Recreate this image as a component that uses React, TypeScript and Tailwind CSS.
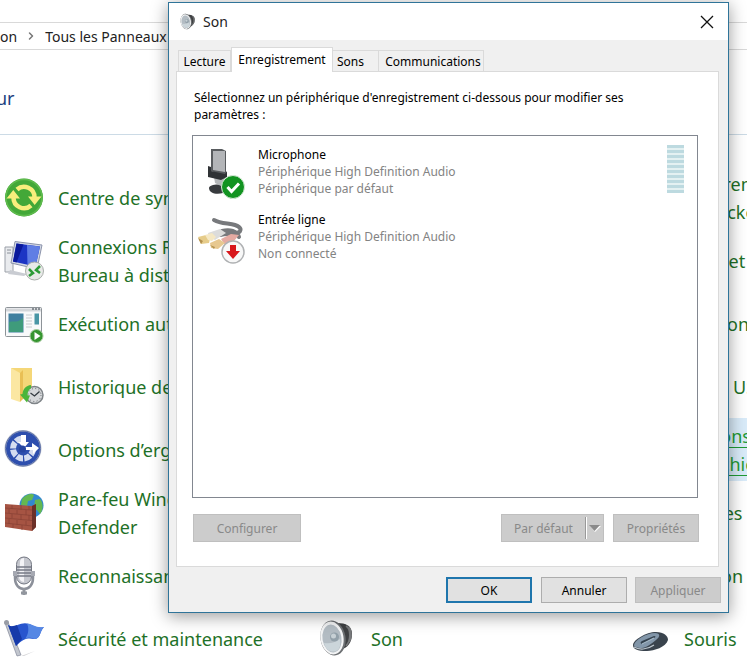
import { ChevronRight } from 'lucide-react';
import type { ReactNode } from 'react';

const Svg = (props: { size?: number; children: ReactNode }) => (
  <svg width={props.size ?? 40} height={props.size ?? 40} viewBox="0 0 40 40" aria-hidden="true">
    {props.children}
  </svg>
);

const SyncIcon = () => (
  <Svg>
    <circle cx="20" cy="19.500" r="19" fill="#43a838" />
    <circle cx="20" cy="19.500" r="18" fill="none" stroke="#5fbb4d" strokeWidth="1.500" />
    <path d="M13 11.500a10.500 10.500 0 0 1 17.500 8" fill="none" stroke="#f8ee7c" strokeWidth="4.500" />
    <path d="M27 27.500a10.500 10.500 0 0 1-17.500-8" fill="none" stroke="#f8ee7c" strokeWidth="4.500" />
    <path d="M24 18.500h13.500L30.700 27zM16 20.500H2.500L9.300 12z" fill="#f8ee7c" />
  </Svg>
);

const RemoteIcon = () => (
  <Svg>
    <path d="M1 6h8v25H1z" fill="#e9ebee" stroke="#9ba0a8" />
    <path d="M3 9h4M3 12h4" stroke="#8a9098" />
    <path d="m6 29 17 4-3 2-16-2z" fill="#c9ccd2" />
    <path d="m11 .5 27 3.500-5 24L7 22z" fill="#d3d8e4" stroke="#8c94ab" />
    <path d="m12.500 2.500 23.500 3-4.500 20L9 20.500z" fill="#1c35c4" />
    <path d="m23 4 13 1.500-4.500 20-8-1.800z" fill="#607ee4" />
    <path d="m12.500 2.500 7 1-7 18-3.500-1z" fill="#0a199b" />
    <circle cx="30.500" cy="30" r="9" fill="#e8eae8" stroke="#a9adaa" />
    <path d="m25 28 4 4-4 3M36 25l-4 4 4 3" fill="none" stroke="#2c9b37" strokeWidth="2.500" />
  </Svg>
);

const AutoplayIcon = () => (
  <Svg>
    <rect x="1.500" y="3.500" width="36" height="29" rx="1" fill="#f8f9fa" stroke="#8d9398" />
    <path d="M2 6h35" stroke="#d3d6d9" strokeWidth="3" />
    <path d="M28 5h8" stroke="#6d747b" strokeWidth="1.500" strokeDasharray="2 1" />
    <rect x="4.500" y="9.500" width="15" height="19" fill="#3f7f9f" />
    <path d="M5 28V18c4-2 7 2 14-4v14z" fill="#3f9b7b" />
    <path d="M22 11h6M22 14h6M22 17h6M22 20h6M22 23h6" stroke="#c6cacd" />
    <rect x="30.500" y="9.500" width="4.500" height="11" fill="#4996a5" />
    <circle cx="32.500" cy="32" r="6.500" fill="#35952f" stroke="#a5ca9e" />
    <path d="M30.500 28v8l6-4z" fill="#fff" />
  </Svg>
);

const HistoryIcon = () => (
  <Svg>
    <path d="M7 1h21v31H15z" fill="#f5d778" />
    <path d="m7 1 9 5v29L7 32z" fill="#fbe7a2" />
    <path d="m16 6 3-3v29l-3 3z" fill="#e9bf55" />
    <circle cx="30.500" cy="28" r="8.500" fill="#d6d8da" stroke="#7e8387" strokeWidth="1.500" />
    <circle cx="30.500" cy="28" r="6.500" fill="none" stroke="#64696e" strokeDasharray="1 2.400" />
    <path d="m26.500 26 4 3 5-4.500" fill="none" stroke="#333a40" strokeWidth="1.300" />
    <path d="M27 18c-5 .5-8 4-8.500 9l-2.500.5 7 8 3-7-2.500-.2c0-3 1-5.500 3.500-7z" fill="#4bb53b" />
  </Svg>
);

const EaseIcon = () => (
  <Svg>
    <circle cx="19" cy="18.500" r="18.500" fill="#b9c0cf" />
    <circle cx="19" cy="18.500" r="17" fill="#2e4fae" />
    <circle
      cx="19"
      cy="18.500"
      r="10"
      fill="none"
      stroke="#d5ddf0"
      strokeWidth="6"
      strokeDasharray="6.550 1.300"
      pathLength="62.800"
    />
    <path d="M20 5h8l5 5 1 9H20z" fill="#2e4fae" />
    <path d="M17 5h5v7h3l-5 6-6-6h3z" fill="#fff" />
    <path d="M20 17h8v-4l7 5-6 6v-4h-9z" fill="#fff" />
    <circle cx="18.500" cy="19" r="3.500" fill="#2745a0" />
    <circle cx="19" cy="18.500" r="17.500" fill="none" stroke="#5d70a8" />
  </Svg>
);

const FirewallIcon = () => (
  <Svg>
    <circle cx="27.500" cy="12.500" r="12" fill="#3389cf" />
    <path d="M18 6c4-5 10-6 12-4l-2 5-4 1-1 5-6-1zM31 7l5-1c4 5 3 11 0 15l-3-4-3-1z" fill="#64b851" />
    <path d="m1 11 27 2 4-2v23l-4 4-27-4z" fill="#a65443" />
    <path d="m28 13 4-2v23l-4 4z" fill="#6c3028" />
    <path
      d="m1 15 27 2M1 20l27 2.500M1 25l27 2.500M1 30l27 3M8 12v4M17 12v5M25 13v4M5 16v4M13 17v4M22 17v5M8 21v4M17 22v5M25 22v5M5 26v5M13 27v5M22 28v4M9 31v4M18 32v5"
      stroke="#8a4336"
      strokeWidth="0.800"
    />
  </Svg>
);

const SpeechIcon = () => (
  <Svg>
    <path d="M11 16v6c0 7 4 11 9 11s9-4 9-11v-6" fill="none" stroke="#8c909a" strokeWidth="2.500" />
    <path d="M20 32v7M17 37h6" stroke="#92969e" strokeWidth="3" />
    <rect x="12.500" y="1" width="15" height="27" rx="7.500" fill="#c5c7ce" stroke="#737782" />
    <path d="M16 6c0-3 2-4 4-4v24c-3 0-5-3-5-5z" fill="#f3f3f6" />
    <path d="M13 11h14M13 14h14M13 17h14M13 20h14" stroke="#777b87" strokeWidth="1.300" />
    <path d="M9 15h4v5H9zM27 15h4v5h-4z" fill="#a6a9b2" />
  </Svg>
);

const FlagIcon = () => (
  <Svg>
    <path d="m17 37 14-5-11 5z" fill="#d5d5d8" />
    <path d="m1 4 12 33 4-1L4 3z" fill="#c2c6ce" stroke="#83889a" strokeWidth="0.700" />
    <circle cx="2.500" cy="3.500" r="2.500" fill="#999da6" />
    <path d="M4 6c7 5 11-4 21-1 4 1 8 5 15 3-5 5-3 12-10 12-6-1-10-1-18 7z" fill="#2855ce" />
    <path d="M23 4.500c5 0 9 5 17 3.500-5 5-3 12-10 12-4-2-7-1-9 0 4-5 4-11 2-15.500z" fill="#5587e4" />
    <path d="M4 6c3 2 6 1 9 0l5 14-6 7z" fill="#163aa9" />
  </Svg>
);

const SpeakerIcon = (props: { size?: number }) => (
  <Svg size={props.size}>
    <path d="M20 4c9 0 15 3 15 11s-4 14-12 16z" fill="#3e4042" />
    <path d="M29 7c5 3 5 14 0 20M32 8c3 4 3 12-1 16" fill="none" stroke="#77797b" strokeWidth="1.500" />
    <ellipse cx="16" cy="19" rx="12.500" ry="17.500" fill="#6d7073" transform="rotate(-10 16 19)" />
    <ellipse cx="15" cy="19" rx="11.500" ry="16.500" fill="#f3f4f5" transform="rotate(-10 15 19)" />
    <ellipse cx="15" cy="19.500" rx="9.500" ry="14" fill="#b3bcc3" transform="rotate(-10 15 19.500)" />
    <path d="M7 24c2 7 7 10 12 8 4-2 5-6 4-12-6 4-10 5-16 4z" fill="#cbd5da" />
    <circle cx="17.500" cy="18" r="4.500" fill="#92a0a9" />
    <circle cx="16.500" cy="17" r="2.500" fill="#c7d0d5" />
  </Svg>
);

const MouseIcon = () => (
  <Svg>
    <path d="M3 26c0-5 13-13 23-13 8 0 12 4 12 8-2 7-14 11-21 11C7 32 3 30 3 26z" fill="#39434d" />
    <path d="M4 26c1-5 12-12 21-12 6 0 5 4 1 7-5 4-10 8-14 8-5 0-8-1-8-3z" fill="#8296a9" />
    <path d="m12 22 12-5c2 0 2 1 0 2l-11 6c-3 0-3-2-1-3z" fill="#33414d" />
    <path d="m12 25 12-6" stroke="#a9bccb" strokeWidth="1.200" />
    <path d="M4 28c5 3 13 3 20-2" fill="none" stroke="#bcc6ce" strokeWidth="1.200" />
  </Svg>
);

const MicrophoneDevice = () => (
  <svg width="48" height="56" viewBox="0 0 48 56" aria-hidden="true">
    <path d="M12 44c0-3 10-5 16-2l-2 7c-7 2-14 0-14-5z" fill="#383b3e" />
    <path d="m17 33 8-2 6 6-5 6-8-4z" fill="#b5b8ba" />
    <path d="M14 5h11l4 2v23l-4 1-11-4z" fill="#595c5f" />
    <path d="M16 7h12v21l-12-2z" fill="#b3b5b8" />
    <path d="m11 22 3 1v4l14 3 2-3v6l-6 3-13-3z" fill="#303336" />
    <circle cx="36" cy="43" r="11.500" fill="#129321" stroke="#d9ead9" />
    <path d="m30.500 43 4 4.500 7.500-8" fill="none" stroke="#fff" strokeWidth="3" />
  </svg>
);

const LineInDevice = () => (
  <svg width="48" height="56" viewBox="0 0 48 56" aria-hidden="true">
    <path
      d="M17 11c7 4 15 3 21 5 6 2 8 6 2 8-5 2-11 0-17 2M25 22c8-2 15 0 17 6"
      fill="none"
      stroke="#77797c"
      strokeWidth="4"
      strokeLinecap="round"
    />
    <path d="m11 24 12-4 6 4-11 7-6-3z" fill="#dcdcdb" />
    <path d="m24 30 10-5 8 1-5 6-9 4z" fill="#e4aaa2" />
    <path d="m1 28 8-2 4 4-1 4-8 1z" fill="#e6cc8a" />
    <path d="m8 26 7-2 4 4-4 4-4-1z" fill="#f5e8c4" />
    <path d="m13 34 9-4 6 4-7 6-7-1z" fill="#e7c890" />
    <path d="m1 29 5 3-2 3zM13 36l5 2-1 2z" fill="#b3914f" />
    <circle cx="36" cy="43" r="11" fill="#f8f8f8" stroke="#afb1b3" strokeWidth="1.500" />
    <path d="M33 36h6v6h4l-7 8-7-8h4z" fill="#d8171c" />
  </svg>
);

type PanelItem = { label: string; icon?: ReactNode; active?: boolean };

const leftItems: PanelItem[] = [
  { label: 'Centre de synchronisation', icon: <SyncIcon /> },
  { label: 'Connexions RemoteApp et\nBureau à distance', icon: <RemoteIcon /> },
  { label: 'Exécution automatique', icon: <AutoplayIcon /> },
  { label: 'Historique des fichiers', icon: <HistoryIcon /> },
  { label: 'Options d’ergonomie', icon: <EaseIcon /> },
  { label: 'Pare-feu Windows\nDefender', icon: <FirewallIcon /> },
  { label: 'Reconnaissance vocale', icon: <SpeechIcon /> },
  { label: 'Sécurité et maintenance', icon: <FlagIcon /> },
];

const middleItems: PanelItem[] = [{ label: 'Son', icon: <SpeakerIcon /> }];

const rightItems: PanelItem[] = [
  { label: 'Chiffrement de lecteur\nBitLocker' },
  { label: 'Date et heure' },
  { label: 'Gestion des couleurs' },
  { label: 'Ports USB' },
  { label: 'Options de l’Explorateur\nde fichiers', active: true },
  { label: 'Polices' },
  { label: 'Région' },
  { label: 'Souris', icon: <MouseIcon /> },
];

const PanelColumn = (props: { items: PanelItem[] }) => (
  <div className="flex flex-col justify-end">
    {props.items.map((item) => (
      <a
        key={item.label}
        href="#"
        className={
          item.active
            ? 'flex h-[63px] items-center gap-3.5 bg-[#d9ebf9] pl-1 text-[#1f9a35] underline underline-offset-4'
            : 'flex h-[63px] items-center gap-3.5 pl-1 text-[#1e7127]'
        }
      >
        <span className="w-10 shrink-0">{item.icon}</span>
        <span className="text-[18px] leading-7 whitespace-pre">{item.label}</span>
      </a>
    ))}
  </div>
);

const devices = [
  {
    name: 'Microphone',
    status: 'Périphérique par défaut',
    icon: <MicrophoneDevice />,
    meter: true,
  },
  { name: 'Entrée ligne', status: 'Non connecté', icon: <LineInDevice />, meter: false },
];

const LevelMeter = () => (
  <div className="mt-px flex w-[17px] flex-col gap-[2px] bg-[#e4f1f2]">
    {Array.from({ length: 10 }, (_, i) => (
      <div key={i} className="h-[3px] bg-[#bddae0]" />
    ))}
  </div>
);

const tabs = [
  { label: 'Lecture', className: 'w-[53px]' },
  { label: 'Enregistrement', className: 'w-[102px]' },
  { label: 'Sons', className: 'w-[46px] pl-1 text-left' },
  { label: 'Communications', className: 'w-[105px] pl-1' },
];

const SoundDialog = () => (
  <section
    role="dialog"
    aria-labelledby="sound-title"
    className="absolute top-[2px] right-[18px] left-[168px] border border-[#2f7499] bg-[#f0f0f0] text-[12px] leading-[17px] text-black shadow-[0_3px_16px_rgba(0,0,0,0.4)]"
  >
    <header className="flex h-[37px] items-center gap-1.5 bg-white pr-3 pl-2.5">
      <SpeakerIcon size={18} />
      <h1 id="sound-title" className="grow text-[14px] text-[#222]">
        Son
      </h1>
      <button type="button" aria-label="Fermer" className="p-0.5">
        <svg width="14" height="14" viewBox="0 0 14 14" aria-hidden="true">
          <path d="m1 1 12 12M13 1 1 13" stroke="#111" strokeWidth="1.300" />
        </svg>
      </button>
    </header>

    <div className="pt-[7px] pr-[9px] pb-[9px] pl-[7px]">
      <div role="tablist" className="flex items-end pl-0.5">
        {tabs.map((tab) => (
          <button
            key={tab.label}
            type="button"
            role="tab"
            aria-selected={tab.label === 'Enregistrement'}
            className={`${tab.className} ${
              tab.label === 'Enregistrement'
                ? 'relative -mb-px h-[25px] border border-b-0 border-[#dadada] bg-white pb-0.5'
                : 'h-[21px] border border-b-0 border-l-0 border-[#dadada] first:border-l'
            }`}
          >
            {tab.label}
          </button>
        ))}
      </div>

      <div className="border border-[#dadada] bg-white px-[15px] pt-[17px] pb-6">
        <p className="pr-10 pl-0.5">
          Sélectionnez un périphérique d'enregistrement ci-dessous pour modifier ses paramètres :
        </p>
        <ul className="mt-3 mr-[5px] min-h-[363px] border border-[#828790] pt-1">
          {devices.map((device) => (
            <li key={device.name} className="flex h-[65px] items-start gap-[13px] pt-1 pr-[13px] pl-1">
              {device.icon}
              <div className="grow pt-0.5 text-[#838383]">
                <div className="text-black">{device.name}</div>
                <div>Périphérique High Definition Audio</div>
                <div>{device.status}</div>
              </div>
              {device.meter && <LevelMeter />}
            </li>
          ))}
        </ul>
        <div className="mt-4 mr-1 ml-px flex text-[#898989]">
          <button type="button" disabled className="h-7 w-[108px] border border-[#bfbfbf] bg-[#cccccc]">
            Configurer
          </button>
          <button
            type="button"
            disabled
            className="ml-auto flex h-7 w-[103px] items-center border border-[#bfbfbf] bg-[#cccccc]"
          >
            <span className="grow">Par défaut</span>
            <span className="flex h-[22px] w-[18px] items-center justify-center border-l border-[#999] shadow-[inset_1px_0_0_#fff]">
              <svg width="12" height="8" viewBox="0 0 12 8" aria-hidden="true">
                <path d="m1 2 5 6 6-6z" fill="#fff" />
                <path d="M0 1h11L5.500 7z" fill="#8a8a8a" />
              </svg>
            </span>
          </button>
          <button type="button" disabled className="ml-[9px] h-7 w-[86px] border border-[#bfbfbf] bg-[#cccccc]">
            Propriétés
          </button>
        </div>
      </div>

      <div className="mt-2.5 -mr-0.5 flex justify-end">
        <button type="button" className="h-[26px] w-[86px] border-2 border-[#1f76ad] bg-[#e1e1e1]">
          OK
        </button>
        <button type="button" className="ml-[9px] h-[26px] w-[86px] border border-[#adadad] bg-[#e1e1e1]">
          Annuler
        </button>
        <button
          type="button"
          disabled
          className="ml-2 h-[26px] w-[86px] border border-[#bfbfbf] bg-[#cccccc] text-[#898989]"
        >
          Appliquer
        </button>
      </div>
    </div>
  </section>
);

export default function App() {
  return (
    <main className="relative min-h-screen overflow-hidden bg-white pt-[22px] font-['Noto_Sans',sans-serif]">
      <nav className="flex h-7 items-center gap-2 border-y border-[#d9d9d9] text-[14px] whitespace-nowrap text-[#222]">
        <a href="#">on</a>
        <ChevronRight size={12} strokeWidth={3} className="text-[#777]" />
        <a href="#">Tous les Panneaux de configuration</a>
      </nav>
      <div className="flex h-[85px] items-center border-b border-[#ccdbe6] pt-3 text-[18px] text-[#1d3f7f]">
        <h2 className="-ml-1">ur</h2>
      </div>
      <div className="grid grid-cols-[repeat(3,313px)] pt-[31px]">
        <PanelColumn items={leftItems} />
        <PanelColumn items={middleItems} />
        <PanelColumn items={rightItems} />
      </div>
      <SoundDialog />
    </main>
  );
}
